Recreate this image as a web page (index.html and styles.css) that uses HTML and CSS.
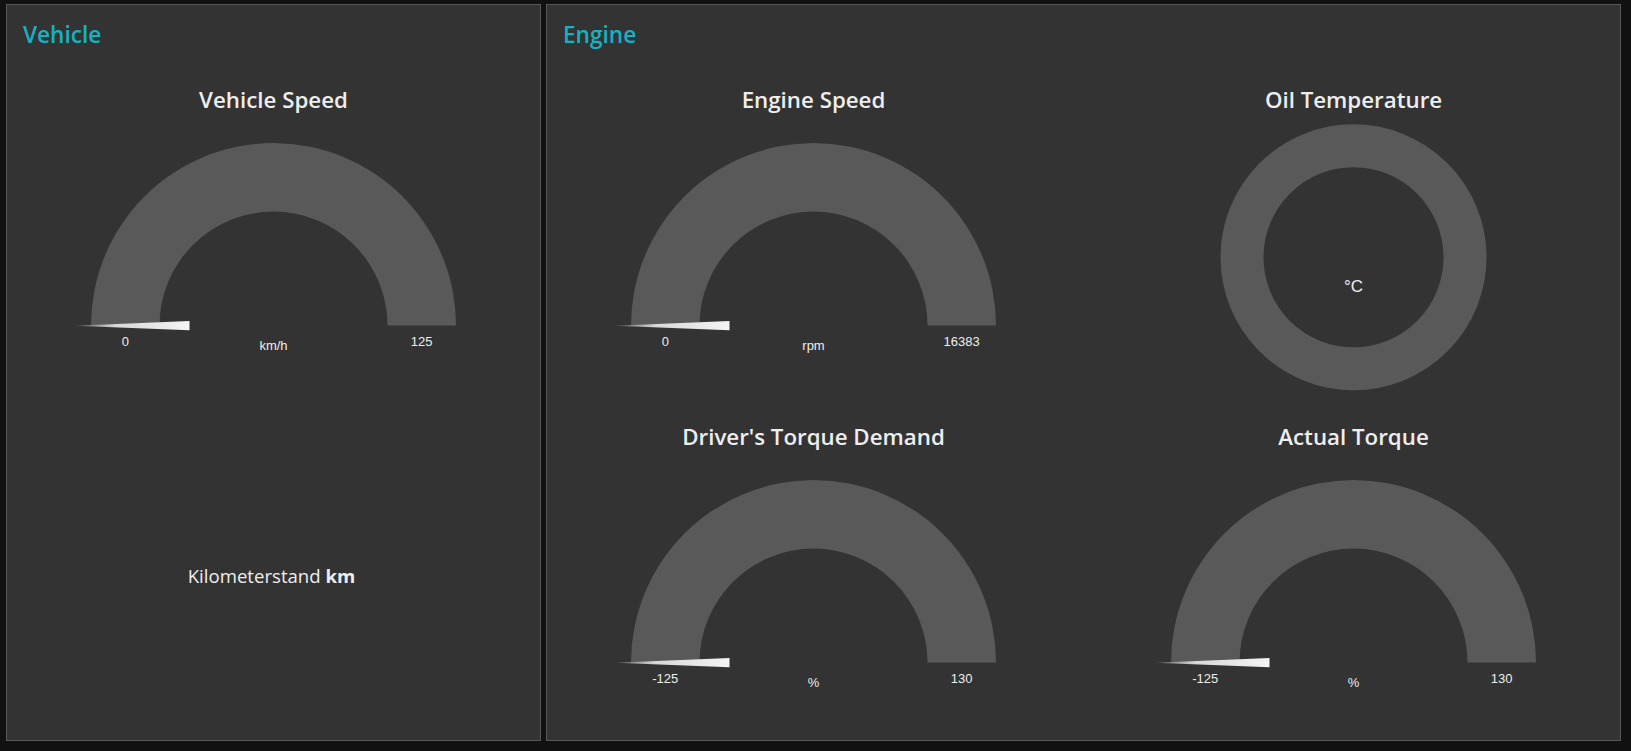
FILE: index.html
```html
<!DOCTYPE html>
<html lang="en">
<head>
<meta charset="utf-8">
<title>Dashboard</title>
<link rel="stylesheet" href="styles.css">
</head>
<body>
<div class="dashboard">
  <section class="group group-vehicle">
    <h2 class="group-title">Vehicle</h2>
    <div class="widgets widgets-one">
      <div class="gauge">
        <h3 class="gauge-title">Vehicle Speed</h3>
        <svg class="gauge-svg" width="533" height="281" viewBox="0 0 533 281">
          <defs>
            <linearGradient id="needle1" x1="0" y1="0" x2="1" y2="0">
              <stop offset="0" stop-color="#555"/>
              <stop offset="0.35" stop-color="#d8d8d8"/>
              <stop offset="1" stop-color="#f4f4f4"/>
            </linearGradient>
          </defs>
          <path class="arc" d="M84 209.6 A182.5 182.5 0 0 1 449 209.6 L380.5 209.6 A114 114 0 0 0 152.5 209.6 Z"/>
          <polygon points="67.5,209.8 182.5,205 182.5,214.3" fill="url(#needle1)"/>
          <text class="lbl" x="118.3" y="229.6">0</text>
          <text class="lbl" x="414.7" y="229.6">125</text>
          <text class="lbl" x="266.5" y="234.2">km/h</text>
        </svg>
      </div>
      <div class="text-widget">Kilometerstand <b>km</b></div>
    </div>
  </section>
  <section class="group group-engine">
    <h2 class="group-title">Engine</h2>
    <div class="widgets widgets-two">
      <div class="gauge">
        <h3 class="gauge-title">Engine Speed</h3>
        <svg class="gauge-svg" width="533" height="281" viewBox="0 0 533 281">
          <defs>
            <linearGradient id="needle2" x1="0" y1="0" x2="1" y2="0">
              <stop offset="0" stop-color="#555"/>
              <stop offset="0.35" stop-color="#d8d8d8"/>
              <stop offset="1" stop-color="#f4f4f4"/>
            </linearGradient>
          </defs>
          <path class="arc" d="M84 209.6 A182.5 182.5 0 0 1 449 209.6 L380.5 209.6 A114 114 0 0 0 152.5 209.6 Z"/>
          <polygon points="67.5,209.8 182.5,205 182.5,214.3" fill="url(#needle2)"/>
          <text class="lbl" x="118.3" y="229.6">0</text>
          <text class="lbl" x="414.7" y="229.6">16383</text>
          <text class="lbl" x="266.5" y="234.2">rpm</text>
        </svg>
      </div>
      <div class="gauge">
        <h3 class="gauge-title">Oil Temperature</h3>
        <svg class="gauge-svg" width="533" height="281" viewBox="0 0 533 281">
          <circle class="donut" cx="266.5" cy="141.3" r="111.5"/>
          <text class="val" x="266.5" y="176.3">°C</text>
        </svg>
      </div>
      <div class="gauge">
        <h3 class="gauge-title">Driver's Torque Demand</h3>
        <svg class="gauge-svg" width="533" height="281" viewBox="0 0 533 281">
          <defs>
            <linearGradient id="needle3" x1="0" y1="0" x2="1" y2="0">
              <stop offset="0" stop-color="#555"/>
              <stop offset="0.35" stop-color="#d8d8d8"/>
              <stop offset="1" stop-color="#f4f4f4"/>
            </linearGradient>
          </defs>
          <path class="arc" d="M84 209.6 A182.5 182.5 0 0 1 449 209.6 L380.5 209.6 A114 114 0 0 0 152.5 209.6 Z"/>
          <polygon points="67.5,209.8 182.5,205 182.5,214.3" fill="url(#needle3)"/>
          <text class="lbl" x="118.3" y="229.6">-125</text>
          <text class="lbl" x="414.7" y="229.6">130</text>
          <text class="lbl" x="266.5" y="234.2">%</text>
        </svg>
      </div>
      <div class="gauge">
        <h3 class="gauge-title">Actual Torque</h3>
        <svg class="gauge-svg" width="533" height="281" viewBox="0 0 533 281">
          <defs>
            <linearGradient id="needle4" x1="0" y1="0" x2="1" y2="0">
              <stop offset="0" stop-color="#555"/>
              <stop offset="0.35" stop-color="#d8d8d8"/>
              <stop offset="1" stop-color="#f4f4f4"/>
            </linearGradient>
          </defs>
          <path class="arc" d="M84 209.6 A182.5 182.5 0 0 1 449 209.6 L380.5 209.6 A114 114 0 0 0 152.5 209.6 Z"/>
          <polygon points="67.5,209.8 182.5,205 182.5,214.3" fill="url(#needle4)"/>
          <text class="lbl" x="118.3" y="229.6">-125</text>
          <text class="lbl" x="414.7" y="229.6">130</text>
          <text class="lbl" x="266.5" y="234.2">%</text>
        </svg>
      </div>
    </div>
  </section>
</div>
</body>
</html>
```

FILE: styles.css
```css
html, body {
  margin: 0;
  padding: 0;
  background: #111111;
}

body {
  font-family: "Open Sans", "Noto Sans", sans-serif;
  color: #eeeeee;
}

.dashboard {
  display: flex;
  gap: 5px;
  padding: 4px 0 0 6px;
}

.group {
  box-sizing: border-box;
  background: #333333;
  border: 1px solid #585858;
  height: 737px;
}

.group-vehicle {
  width: 535px;
}

.group-engine {
  width: 1075px;
}

.group-title {
  margin: 0;
  padding: 15px 16px 0;
  height: 46px;
  font-size: 22.6px;
  line-height: 30px;
  font-weight: 600;
  color: #16b1c2;
}

.widgets {
  display: grid;
  grid-template-rows: 331px 331px;
  row-gap: 6px;
}

.widgets-one {
  grid-template-columns: 533px;
}

.widgets-two {
  grid-template-columns: 533px 533px;
  column-gap: 7px;
}

.gauge {
  display: flex;
  flex-direction: column;
  align-items: center;
}

.gauge-title {
  margin: 0;
  padding-top: 19px;
  margin-bottom: 1px;
  font-size: 22.3px;
  line-height: 30px;
  font-weight: 600;
  color: #eeeeee;
  text-align: center;
}

.gauge-svg {
  display: block;
}

.arc {
  fill: #595959;
}

.donut {
  fill: none;
  stroke: #595959;
  stroke-width: 43;
}

.lbl {
  font-family: "Liberation Sans", Arial, sans-serif;
  font-size: 13px;
  fill: #eeeeee;
  text-anchor: middle;
}

.val {
  font-family: "Liberation Sans", Arial, sans-serif;
  font-size: 17px;
  fill: #eeeeee;
  text-anchor: middle;
}

.text-widget {
  padding-top: 161px;
  padding-right: 4px;
  font-size: 18.6px;
  line-height: 24px;
  text-align: center;
  color: #eeeeee;
}

.text-widget b {
  font-weight: 700;
}
```
